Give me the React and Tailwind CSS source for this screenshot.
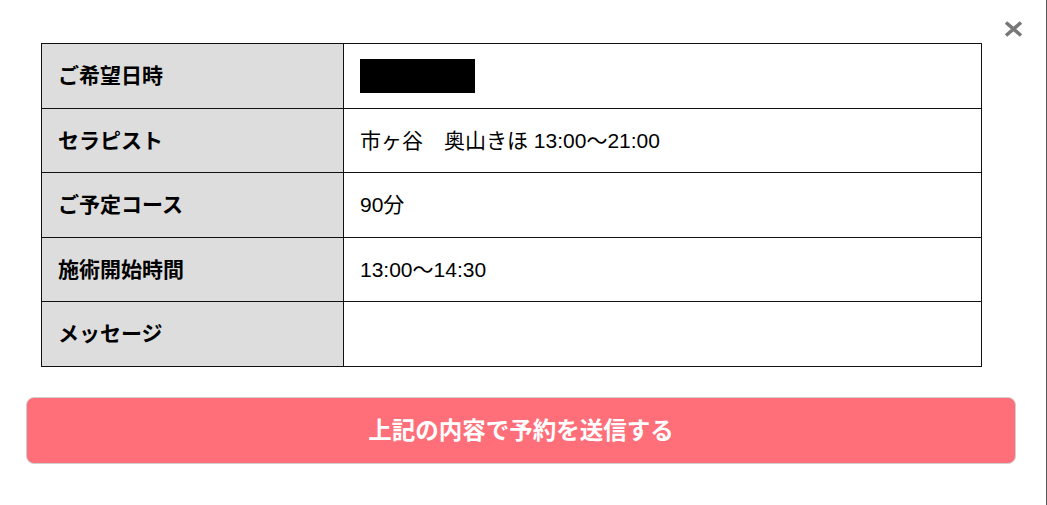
const rows = [
  { label: 'ご希望日時', value: null, redacted: true },
  { label: 'セラピスト', value: '市ヶ谷　奥山きほ 13:00～21:00' },
  { label: 'ご予定コース', value: '90分' },
  { label: '施術開始時間', value: '13:00～14:30' },
  { label: 'メッセージ', value: '' },
]

export default function App() {
  return (
    <div
      className="flex h-[505px] w-full bg-white text-black"
      style={{ fontFamily: '"Liberation Sans", "Noto Sans CJK JP", sans-serif' }}
    >
      <div className="relative flex-1">
        {/* close */}
        <button className="absolute left-[1004px] top-[21px] w-[19px] h-[16px]">
          <svg viewBox="0 0 19 16" className="w-[19px] h-[16px]">
            <path d="M2 1.5 L17 14.5 M17 1.5 L2 14.5" stroke="#777" strokeWidth="3.6" strokeLinecap="butt" />
          </svg>
        </button>

        <div className="pt-[43px] pl-[41px]">
          <div className="w-[941px] border-t border-l border-[#111]">
            {rows.map((r) => (
              <div key={r.label} className="flex h-[64.6px]">
                <div className="w-[302px] flex items-center pl-[16px] bg-[#dddddd] border-r border-b border-[#111] text-[21px] font-bold">
                  {r.label}
                </div>
                <div className="flex-1 flex items-center pl-[16px] border-r border-b border-[#111] text-[21px]">
                  {r.redacted ? (
                    <div className="w-[115px] h-[34px] bg-black" />
                  ) : (
                    r.value
                  )}
                </div>
              </div>
            ))}
          </div>
        </div>

        <div className="pl-[26px] mt-[30px]">
          <button className="w-[990px] h-[67px] pt-[3px] rounded-[8px] border border-[#cfcfcf] bg-[#ff6f7a] text-white text-[23.5px] font-bold flex items-center justify-center">
            上記の内容で予約を送信する
          </button>
        </div>
      </div>
      <div className="w-px h-full bg-[#555]" />
    </div>
  )
}
